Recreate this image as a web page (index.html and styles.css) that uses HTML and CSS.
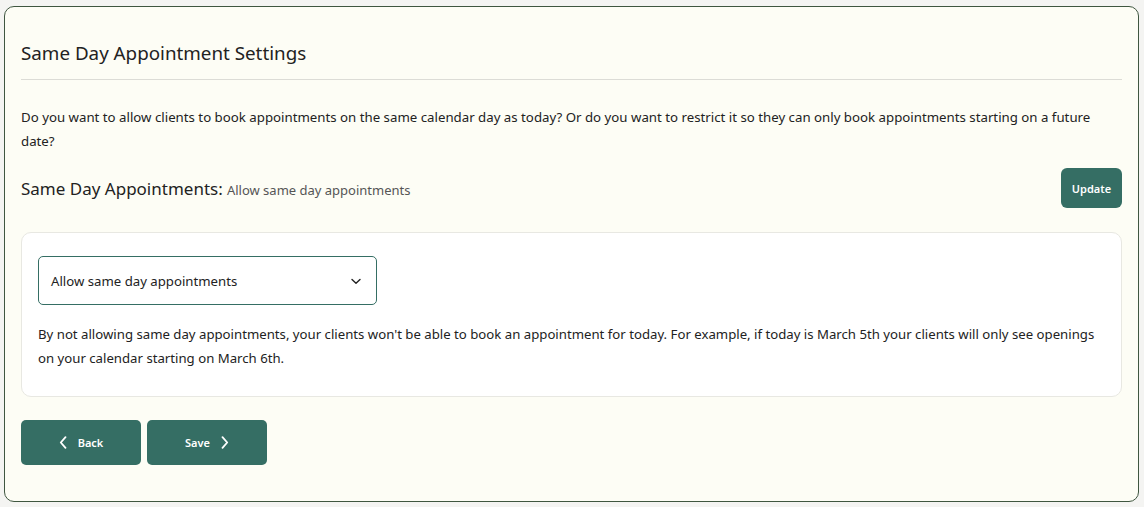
FILE: index.html
```html
<!DOCTYPE html>
<html>
<head>
<meta charset="utf-8">
<link rel="stylesheet" href="styles.css">
</head>
<body>
<div class="card">
  <h1 class="title">Same Day Appointment Settings</h1>
  <p class="intro">Do you want to allow clients to book appointments on the same calendar day as today? Or do you want to restrict it so they can only book appointments starting on a future date?</p>
  <div class="setting-row">
    <div class="setting-label"><span class="setting-name">Same Day Appointments:</span> <span class="setting-value">Allow same day appointments</span></div>
    <button class="btn btn-update">Update</button>
  </div>
  <div class="panel">
    <div class="select">
      <span>Allow same day appointments</span>
      <svg class="chev" width="10" height="7" viewBox="0 0 10 7"><path d="M1 1.5 L5 5.3 L9 1.5" fill="none" stroke="#222" stroke-width="1.4" stroke-linecap="round" stroke-linejoin="round"/></svg>
    </div>
    <p class="note">By not allowing same day appointments, your clients won't be able to book an appointment for today. For example, if today is March 5th your clients will only see openings on your calendar starting on March 6th.</p>
  </div>
  <div class="actions">
    <button class="btn btn-nav"><svg width="8" height="13" viewBox="0 0 8 13"><path d="M6.5 1.2 L1.8 6.5 L6.5 11.8" fill="none" stroke="#fff" stroke-width="1.8" stroke-linecap="round" stroke-linejoin="round"/></svg><span>Back</span></button>
    <button class="btn btn-nav"><span>Save</span><svg width="8" height="13" viewBox="0 0 8 13"><path d="M1.5 1.2 L6.2 6.5 L1.5 11.8" fill="none" stroke="#fff" stroke-width="1.8" stroke-linecap="round" stroke-linejoin="round"/></svg></button>
  </div>
</div>
</body>
</html>
```
FILE: styles.css
```css
* { box-sizing: border-box; }
html, body { margin: 0; padding: 0; }
body {
  background: #f4f4f2;
  font-family: "Noto Sans", "Open Sans", sans-serif;
  color: #222;
  padding: 6px 5px 5px 4px;
}
.card {
  background: #fdfdf5;
  border: 1px solid #3f5640;
  border-radius: 10px;
  padding: 30px 16px 28px 16px;
  height: 496px;
}
.title {
  font-size: 18.8px;
  font-weight: 400;
  margin: 0;
  line-height: 32px;
  padding-bottom: 10px;
  border-bottom: 1px solid #dcdcd6;
  color: #222;
}
.intro {
  font-size: 13.25px;
  line-height: 24px;
  margin: 25px 0 0 0;
}
.setting-row {
  display: flex;
  justify-content: space-between;
  align-items: center;
  margin-top: 15px;
}
.setting-name { font-size: 17px; }
.setting-value { font-size: 13px; color: #555; }
.btn {
  border: none;
  background: #356e64;
  color: #fff;
  font-family: "Noto Sans", "Open Sans", sans-serif;
  font-weight: 600;
  font-size: 11px;
  border-radius: 5px;
  cursor: pointer;
}
.btn-update {
  width: 61px;
  height: 40px;
  border-radius: 6px;
}
.panel {
  margin-top: 24px;
  background: #fff;
  border: 1px solid #e8e8e2;
  border-radius: 10px;
  padding: 23px 16px 26px 16px;
}
.select {
  width: 339px;
  height: 49px;
  border: 1px solid #356e64;
  border-radius: 5px;
  display: flex;
  align-items: center;
  justify-content: space-between;
  padding: 0 15px 0 12px;
  font-size: 13.2px;
  background: #fff;
}
.chev { margin-top: 1px; }
.note {
  font-size: 13.2px;
  line-height: 24px;
  margin: 17px 0 0 0;
}
.actions {
  display: flex;
  gap: 6px;
  margin-top: 23px;
}
.btn-nav {
  width: 120px;
  height: 45px;
  display: flex;
  align-items: center;
  justify-content: center;
  gap: 11px;
}
```
